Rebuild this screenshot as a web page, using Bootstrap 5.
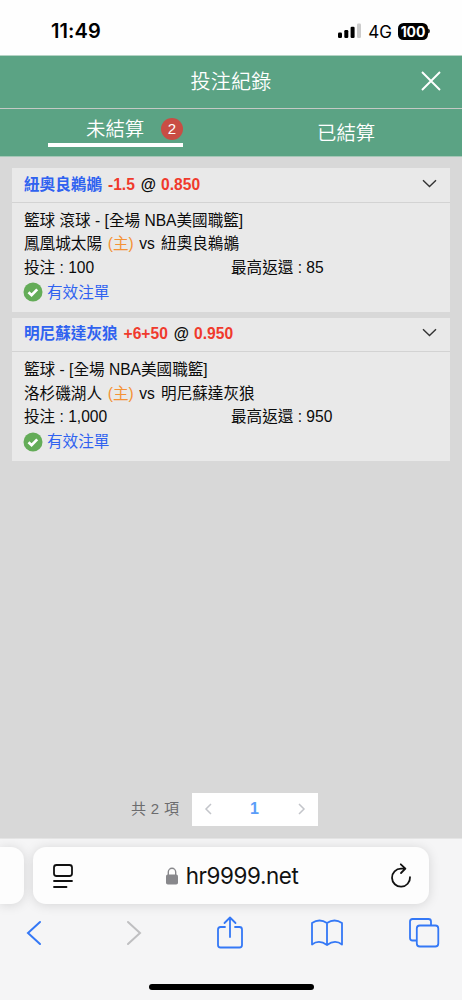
<!DOCTYPE html>
<html lang="zh-Hant">
<head>
<meta charset="utf-8">
<meta name="viewport" content="width=device-width, initial-scale=1">
<title>投注紀錄</title>
<link href="https://cdn.jsdelivr.net/npm/bootstrap@5.3.0/dist/css/bootstrap.min.css" rel="stylesheet">
<style>
body{font-family:"Liberation Sans","Noto Sans CJK TC",sans-serif;background:#d8d8d8;color:#0b0b0b;height:1000px;overflow:hidden}
svg{display:block;flex:none}
.status{height:55px;background:#fefefe;padding:7px 32px 0 51px;font-family:Inter,sans-serif;color:#000}
.clock{font-size:20px;font-weight:600;letter-spacing:.1px;line-height:24px}
.net{font-size:17px;line-height:24px;margin:1px 6px 0 7px}
.batt{width:30px;height:17px;border-radius:5.5px;background:#000;color:#fff;font-size:14px;font-weight:700;line-height:17px;letter-spacing:-.1px}
.green{background:#5ba384;color:#fff;font-weight:350}
.titlebar{height:53px;border-top:1px solid #b5d3c5;font-size:20px;letter-spacing:.3px}
.closer{right:21px;top:15px}
.tabs{height:49px;border-top:1px solid #c4c9c5;border-bottom:1px solid #a5c7b7;font-size:19.4px;line-height:24px}
.on{width:135px;margin-left:48px;height:38px;border-bottom:4px solid #fff;padding:6px 0 0 38px}
.count{width:22px;height:22px;background:#c94d44;font-size:15px;line-height:22px}
.off{margin-left:134px}
.list{height:681px;padding:11px 12px 0}
.bet{margin-bottom:6px;border:0;border-radius:0;background:#e9e9e9;font-size:15.6px;color:#0b0b0b}
.bet-top{height:34.5px;border-bottom:1.5px solid #d3d3d3;padding:0 13px 0 12px;font-weight:700;line-height:32px}
.bet-top svg{margin-bottom:3px}
.at{margin:0 5px 0 6px}
.bet-body{height:109px;padding:6px 12px 0;line-height:23.7px}
.bet-body svg{margin:0 4px 0 -1px}
.valid{margin-top:1px}
.blue{color:#2f62f0}.red{color:#f03a2c}.orange{color:#f49236}
.line-red{margin-left:6px}
.home-mark{margin:0 1px 0 1.5px}
.versus{margin-right:2px}
.stake{width:207px}
.pager{height:33px;margin-bottom:12.5px;padding-left:119px;font-size:15px;color:#6c6c6e}
.total{width:60.5px;letter-spacing:.3px}
.pages{width:126px;height:33px;background:#fff;padding:0 12px;color:#5b9df8;font-weight:700;font-size:16px}
.browser{height:162px;background:#f5f5f6;border-top:1px solid #e5e5e5;padding-top:8px}
.side{width:24px;height:57px;background:#fdfdfd;border-radius:0 13px 13px 0;box-shadow:0 1px 12px #0002}
.addr{width:396px;height:57px;margin-left:9px;background:#fdfdfd;border-radius:13px;padding:0 17px 0 19px;box-shadow:0 1px 12px #0002}
.host{font:22.4px Inter,sans-serif;letter-spacing:-.4px;color:#111}
.tools{height:58px;padding:0 21px 0 17px}
.slot{width:34px}
.shift{padding-left:4px}.nudge{padding-left:2px}
.home{width:165px;height:6px;background:#000;margin-top:22px}
</style>
</head>
<body class="d-flex flex-column">
<header class="status d-flex justify-content-between align-items-center">
  <div class="clock">11:49</div>
  <div class="d-flex align-items-center">
    <svg width="23" height="16" viewBox="0 0 23 16"><rect y="9.5" width="4" height="5.5" rx="1.2"/><rect x="6.3" y="7" width="4" height="8" rx="1.2"/><rect x="12.6" y="3.7" width="4" height="11.3" rx="1.2"/><rect x="19" y=".5" width="4" height="14.5" rx="1.2" fill="#ccc"/></svg>
    <span class="net">4G</span>
    <div class="batt text-center">100</div>
    <svg width="2" height="6"><path d="M0 .5Q2 1 2 3T0 5.5Z" fill="#222"/></svg>
  </div>
</header>
<div class="green titlebar flex-shrink-0 position-relative d-flex justify-content-center align-items-center">
  <span>投注紀錄</span>
  <svg class="closer position-absolute" width="20" height="20" viewBox="0 0 20 20"><path d="m1 1 18 18M19 1 1 19" stroke="#fff" stroke-width="1.9"/></svg>
</div>
<nav class="green tabs flex-shrink-0 d-flex">
  <div class="on d-flex justify-content-between align-items-center"><span>未結算</span><span class="count rounded-circle text-center">2</span></div>
  <div class="off d-flex align-items-center">已結算</div>
</nav>
<main class="list flex-shrink-0 d-flex flex-column">
  <article class="card bet">
    <div class="bet-top d-flex align-items-center justify-content-between">
      <div class="d-flex"><span class="blue">紐奧良鵜鶘</span><span class="red line-red">-1.5</span><span class="at">@</span><span class="red">0.850</span></div>
      <svg width="15" height="9" viewBox="0 0 15 9"><path d="m1 1.2 6.5 6.3L14 1.2" fill="none" stroke="#333" stroke-width="1.4"/></svg>
    </div>
    <div class="bet-body">
      <div>籃球 滾球 - [全場 NBA美國職籃]</div>
      <div>鳳凰城太陽 <span class="orange home-mark">(主)</span> <span class="versus">vs</span> 紐奧良鵜鶘</div>
      <div class="d-flex"><span class="stake">投注 : 100</span><span>最高返還 : 85</span></div>
      <div class="valid d-flex align-items-center blue"><svg width="20" height="20" viewBox="0 0 20 20"><circle cx="10" cy="10" r="9.5" fill="#64ac58"/><path d="m5.500 10.200 3.100 3 5.600-5.800" fill="none" stroke="#fff" stroke-width="2.7"/></svg>有效注單</div>
    </div>
  </article>
  <article class="card bet">
    <div class="bet-top d-flex align-items-center justify-content-between">
      <div class="d-flex"><span class="blue">明尼蘇達灰狼</span><span class="red line-red">+6+50</span><span class="at">@</span><span class="red">0.950</span></div>
      <svg width="15" height="9" viewBox="0 0 15 9"><path d="m1 1.2 6.5 6.3L14 1.2" fill="none" stroke="#333" stroke-width="1.4"/></svg>
    </div>
    <div class="bet-body">
      <div>籃球 - [全場 NBA美國職籃]</div>
      <div>洛杉磯湖人 <span class="orange home-mark">(主)</span> <span class="versus">vs</span> 明尼蘇達灰狼</div>
      <div class="d-flex"><span class="stake">投注 : 1,000</span><span>最高返還 : 950</span></div>
      <div class="valid d-flex align-items-center blue"><svg width="20" height="20" viewBox="0 0 20 20"><circle cx="10" cy="10" r="9.5" fill="#64ac58"/><path d="m5.500 10.200 3.100 3 5.600-5.800" fill="none" stroke="#fff" stroke-width="2.7"/></svg>有效注單</div>
    </div>
  </article>
  <div class="pager mt-auto d-flex align-items-center"><span class="total">共 2 項</span>
    <div class="pages d-flex align-items-center justify-content-between">
      <svg width="9" height="12" viewBox="0 0 9 12"><path d="M7 1 2 6l5 5" fill="none" stroke="#c3c5ca" stroke-width="1.5"/></svg>
      <span>1</span>
      <svg width="9" height="12" viewBox="0 0 9 12"><path d="m2 1 5 5-5 5" fill="none" stroke="#c3c5ca" stroke-width="1.5"/></svg>
    </div>
  </div>
</main>
<footer class="browser flex-shrink-0">
  <div class="d-flex">
    <div class="side"></div>
    <div class="addr d-flex align-items-center justify-content-between">
      <svg width="22" height="26" viewBox="0 0 22 26" fill="none" stroke="#111" stroke-width="1.8" stroke-linecap="round"><rect x="2" y="2" width="18" height="11" rx="2.5"/><path d="M2 18h18M2 24h12.5"/></svg>
      <div class="d-flex align-items-center"><svg class="me-2" width="12" height="18" viewBox="0 0 12 18"><rect y="7.5" width="12" height="10" rx="1.8" fill="#88888c"/><path d="M2.3 8V5a3.7 3.7 0 0 1 7.4 0v3" fill="none" stroke="#88888c" stroke-width="1.4"/></svg><span class="host">hr9999.net</span></div>
      <svg width="22" height="26" viewBox="0 0 22 26" fill="none" stroke="#111" stroke-width="1.8" stroke-linecap="round" stroke-linejoin="round"><path d="M14.500 5.700H11A9 9 0 1 0 20 14.200M10.800 1.300l4.600 4.300-4.400 4.400"/></svg>
    </div>
  </div>
  <div class="tools d-flex align-items-center justify-content-between">
    <div class="slot d-flex justify-content-center"><svg width="16" height="26" viewBox="0 0 16 26"><path d="M14 2 2 13l12 11" fill="none" stroke="#3478f6" stroke-width="2" stroke-linecap="round"/></svg></div>
    <div class="slot shift d-flex justify-content-center"><svg width="16" height="26" viewBox="0 0 16 26"><path d="m2 2 12 11L2 24" fill="none" stroke="#bfbfc1" stroke-width="2" stroke-linecap="round"/></svg></div>
    <div class="slot nudge d-flex justify-content-center"><svg width="28" height="34" viewBox="0 0 28 34" fill="none" stroke="#3478f6" stroke-width="1.8" stroke-linecap="round" stroke-linejoin="round"><path d="M9 11H4.500Q2 11 2 13.500V29q0 2.500 2.500 2.500h19Q26 31.500 26 29V13.500Q26 11 23.500 11H19M14 21V1.500M8.500 7 14 1.500 19.500 7"/></svg></div>
    <div class="slot d-flex justify-content-center"><svg width="34" height="28" viewBox="0 0 34 28" fill="none" stroke="#3478f6" stroke-width="1.8" stroke-linejoin="round"><path d="M17 26Q9 20 2 25.500V4q7.500-5 15 0 7.500-5 15 0v21.500Q25 20 17 26V4"/></svg></div>
    <div class="slot d-flex justify-content-center"><svg width="32" height="32" viewBox="0 0 32 32" fill="none" stroke="#3478f6" stroke-width="1.8"><path d="M8.500 23.500H4.500Q2 23.500 2 21V4.500Q2 2 4.500 2h16Q23 2 23 4.500v4"/><rect x="8.800" y="8.500" width="21.500" height="21" rx="3"/></svg></div>
  </div>
  <div class="home rounded-pill mx-auto"></div>
</footer>
<script src="https://cdn.jsdelivr.net/npm/bootstrap@5.3.0/dist/js/bootstrap.bundle.min.js"></script>
</body>
</html>
